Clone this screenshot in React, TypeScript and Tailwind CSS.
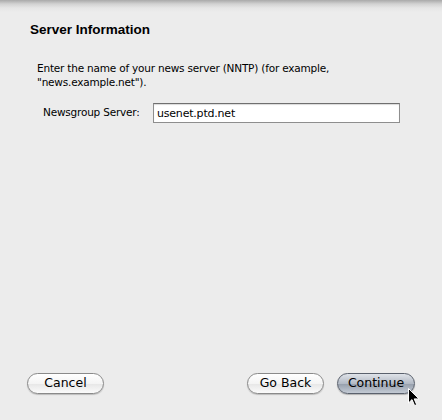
import React from 'react';

const font = "font-['DejaVu_Sans','Liberation_Sans',sans-serif]";

const PillButton: React.FC<{ label: string; primary?: boolean; className?: string }> = ({ label, primary, className }) => {
    const base = "h-[21px] rounded-full border text-[12.5px] leading-none text-black flex items-center justify-center";
    const look = primary
        ? "border-[#5a616d] bg-[linear-gradient(to_bottom,#dfe3e9_0%,#b3bac5_50%,#959eab_51%,#c3cad4_100%)] shadow-[0_1px_1px_rgba(0,0,0,0.25)]"
        : "border-[#8a8a8a] bg-[linear-gradient(to_bottom,#ffffff_0%,#f4f4f4_50%,#e6e6e6_51%,#fbfbfb_100%)] shadow-[0_1px_1px_rgba(0,0,0,0.2)]";
    return <button type="button" className={`${base} ${look} ${className ?? ''}`}>{label}</button>;
};

const Cursor = () => (
    <svg className="absolute left-[408px] top-[388px]" width="12" height="19" viewBox="0 0 12 19">
        <path d="M0.5 0.5 L0.5 15 L4 11.6 L6.6 17.6 L8.7 16.7 L6.2 10.9 L11 10.9 Z" fill="#000" stroke="#fff" strokeWidth="1" strokeLinejoin="round" />
    </svg>
);

export default function App() {
    return (
        <div className={`relative w-[442px] h-[420px] overflow-hidden flex flex-col bg-[linear-gradient(to_bottom,#a9a9a9_0px,#d2d2d2_4px,#e6e6e6_8px,#ececec_12px)] ${font}`}>
            <h2 className="ml-[30px] mt-[22px] font-['Liberation_Sans',sans-serif] text-[13.5px] font-bold leading-[16px] text-black">Server Information</h2>

            <p className="ml-[37px] mt-[23px] w-[330px] text-[10.5px] tracking-[-0.2px] leading-[14px] text-black">
                Enter the name of your news server (NNTP) (for example, "news.example.net").
            </p>

            <div className="mt-[14px] flex items-center">
                <label className="ml-[43px] w-[110px] text-[10.5px] tracking-[-0.2px] text-black">Newsgroup Server:</label>
                <input
                    type="text"
                    defaultValue="usenet.ptd.net"
                    className="w-[247px] h-[20px] border border-[#8e8e8e] border-t-[#6f6f6f] bg-white px-[3px] text-[11px] tracking-[-0.2px] text-black outline-none shadow-[inset_0_1px_1px_rgba(0,0,0,0.15)]"
                />
            </div>

            <div className="mt-auto mb-[26px] flex items-center">
                <PillButton label="Cancel" className="ml-[27px] w-[77px]" />
                <PillButton label="Go Back" className="ml-auto w-[77px]" />
                <PillButton label="Continue" primary className="ml-[13px] mr-[27px] w-[78px]" />
            </div>

            <Cursor />
        </div>
    );
}
